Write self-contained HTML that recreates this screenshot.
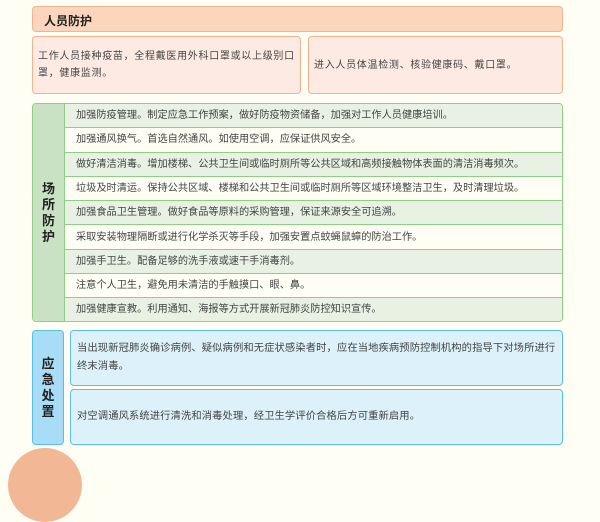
<!DOCTYPE html>
<html><head><meta charset="utf-8"><style>
*{margin:0;padding:0;box-sizing:border-box}
body{width:600px;height:464px;background:#fefef5;position:relative;overflow:hidden;font-family:"Liberation Sans","Noto Sans CJK SC",sans-serif;color:#444;font-size:10px}
.abs{position:absolute}
.hdr{left:32px;top:6px;width:531px;height:26px;background:#fbd6bd;border:1px solid #f0b48e;border-radius:4px;font-weight:bold;font-size:12px;color:#222;padding:5px 0 0 11px}
.pk{top:36px;height:58px;background:#fdebe3;border:1px solid #f0b48e;border-radius:4px;padding:0 5px;display:flex;align-items:center;line-height:17px;letter-spacing:0.7px;white-space:nowrap}
.gr{left:32px;top:103px;width:531px;height:219px;border:1px solid #8fcf85;border-radius:4px;background:#fefef5;overflow:hidden}
.gl{position:absolute;left:0;top:0;width:32px;height:100%;background:#c9e2c3;border-right:1px solid #8fcf85;display:flex;align-items:center;justify-content:center;font-weight:bold;font-size:13px;color:#222;line-height:16px;text-align:center}
.row{position:absolute;left:32px;right:0;height:24.3px;border-bottom:1px solid #8fcf85;padding-left:11px;line-height:23px;font-size:10.2px}
.row.g{background:#e8f1e4}
.bl{left:32px;top:330px;width:32px;height:115px;background:#a9dcf6;border:1px solid #5bc0e6;border-radius:4px;display:flex;align-items:center;justify-content:center;font-weight:bold;font-size:13px;color:#222;line-height:16px;text-align:center}
.bb{left:70px;width:493px;background:#ddf1fb;border:1px solid #5bc0e6;border-radius:4px;padding:0 6px;display:flex;align-items:center;line-height:18px;letter-spacing:0.1px;font-size:10.3px;white-space:nowrap}
</style></head><body>
<div class="abs hdr">人员防护</div>
<div class="abs pk" style="left:32px;width:269px"><div>工作人员接种疫苗，全程戴医用外科口罩或以上级别口<br>罩，健康监测。</div></div>
<div class="abs pk" style="left:308px;width:255px">进入人员体温检测、核验健康码、戴口罩。</div>
<div class="abs gr">
<div class="gl">场<br>所<br>防<br>护</div>
<div class="row g" style="top:0">加强防疫管理。制定应急工作预案，做好防疫物资储备，加强对工作人员健康培训。</div>
<div class="row" style="top:24.3px">加强通风换气。首选自然通风。如使用空调，应保证供风安全。</div>
<div class="row g" style="top:48.6px">做好清洁消毒。增加楼梯、公共卫生间或临时厕所等公共区域和高频接触物体表面的清洁消毒频次。</div>
<div class="row" style="top:72.9px">垃圾及时清运。保持公共区域、楼梯和公共卫生间或临时厕所等区域环境整洁卫生，及时清理垃圾。</div>
<div class="row g" style="top:97.2px">加强食品卫生管理。做好食品等原料的采购管理，保证来源安全可追溯。</div>
<div class="row" style="top:121.5px">采取安装物理隔断或进行化学杀灭等手段，加强安置点蚊蝇鼠蟑的防治工作。</div>
<div class="row g" style="top:145.8px">加强手卫生。配备足够的洗手液或速干手消毒剂。</div>
<div class="row" style="top:170.1px">注意个人卫生，避免用未清洁的手触摸口、眼、鼻。</div>
<div class="row g" style="top:194.4px;border-bottom:none">加强健康宣教。利用通知、海报等方式开展新冠肺炎防控知识宣传。</div>
</div>
<div class="abs bl">应<br>急<br>处<br>置</div>
<div class="abs bb" style="top:330px;height:56px"><div>当出现新冠肺炎确诊病例、疑似病例和无症状感染者时，应在当地疾病预防控制机构的指导下对场所进行<br>终末消毒。</div></div>
<div class="abs bb" style="top:389px;height:56px">对空调通风系统进行清洗和消毒处理，经卫生学评价合格后方可重新启用。</div>
<div class="abs" style="left:8px;top:448px;width:74px;height:74px;border-radius:50%;background:#f2b895"></div>
</body></html>
